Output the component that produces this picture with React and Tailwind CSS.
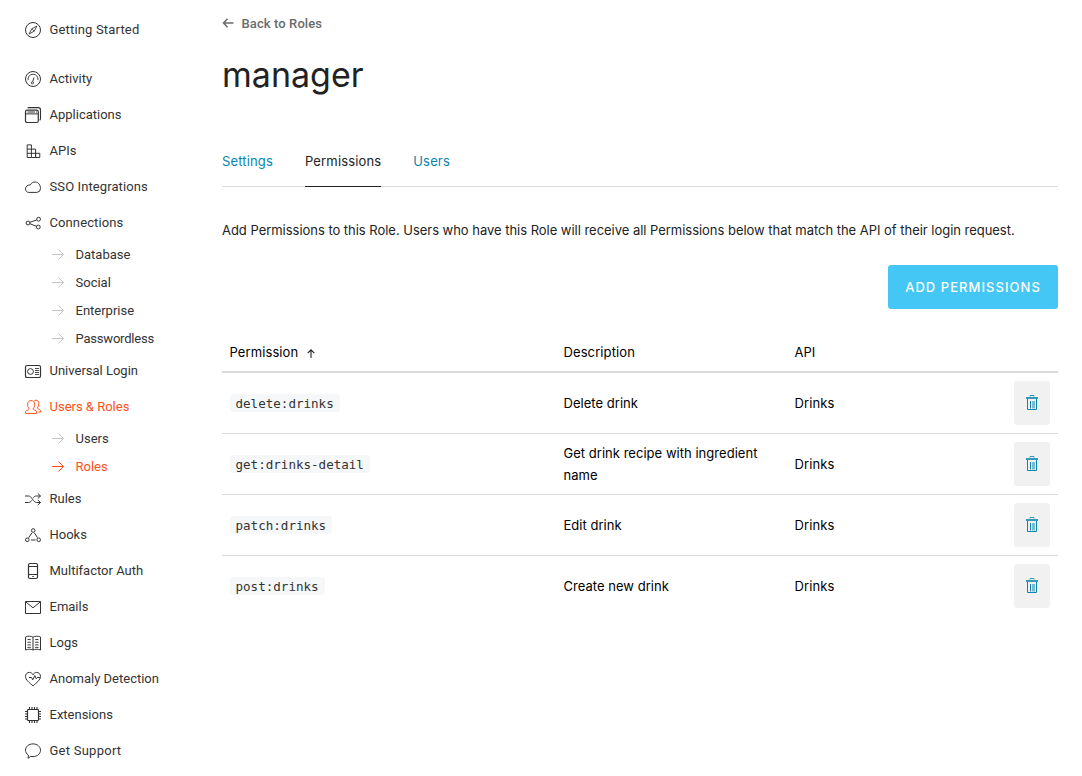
const ICONS = {
  compass: (
    <>
      <circle cx="8" cy="8" r="7.5" />
      <path d="M12 4 9.2 9.2 4 12 6.8 6.8z" strokeWidth="0.9" />
      <path d="M6.8 6.8 9.2 9.2" strokeWidth="0.8" />
    </>
  ),
  gauge: (
    <>
      <circle cx="8" cy="8" r="7.5" />
      <path d="M3.1 9.2A5 5 0 1 1 12.900 9.200" strokeWidth="0.9" />
      <circle cx="7.400" cy="11.800" r="1.100" strokeWidth="0.9" />
      <path d="M7.700 10.700 9 6.500" />
    </>
  ),
  windows: (
    <>
      <rect x="0.5" y="3.2" width="12.8" height="12.3" rx="1.8" strokeWidth="1.2" />
      <path d="M.5 6.9h12.8M2.5 5h7.5M11 5h1" />
      <path d="M2.6 1.2C3 .7 3.4.6 4 .6h9.2c1.4 0 2.3.9 2.3 2.3v8.7c0 .8-.2 1.3-.8 1.7" strokeWidth="1.1" />
    </>
  ),
  blocks: (
    <path d="M2.2 1.900h4.200v12.600H2.200zM6.400 6.100h4.200v8.400M2.200 6.100h4.200M2.200 10.300h12.600v4.200H6.400M10.600 10.300v4.200" />
  ),
  cloud: (
    <path d="M3.7 13.4h8.1a3.9 3.9 0 0 0 3.7-4c0-2.9-1.8-6.4-5.3-6.4-2.2 0-3.9 1-4.9 2.9C2.3 6 .5 7.5.5 9.8c0 2.1 1.4 3.6 3.2 3.6z" />
  ),
  share: (
    <>
      <circle cx="3" cy="8" r="1.9" />
      <circle cx="13.6" cy="4.2" r="1.9" />
      <circle cx="13.3" cy="12" r="1.9" />
      <path d="M4.9 7.3 11.8 4.9M4.8 8.7 11.5 11.3" />
    </>
  ),
  idcard: (
    <>
      <rect x="0.5" y="2.5" width="15" height="12" rx="1.6" strokeWidth="1.2" />
      <circle cx="5.5" cy="8.5" r="2.9" />
      <path d="M10 5.5h4M10 7.5h4M10 9.5h4M10 11.5h4" strokeWidth="0.9" />
    </>
  ),
  users: (
    <>
      <path d="M.6 14.4v-1.5c0-1 1-1.5 2.2-1.9 1-.3 1.4-.6 1.2-1.4-.9-1-1.4-2.3-1.4-4.2C2.6 3 4 1.6 6.1 1.6S9.600 3 9.600 5.400c0 1.900-.5 3.200-1.400 4.200-.2.800.2 1.100 1.200 1.400 1.200.4 2.200.9 2.200 1.900v1.500z" />
      <path d="M9.200 2.100C9.700 1.500 10.300 1.200 11 1.200c1.800 0 2.800 1.300 2.800 3.500 0 1.700-.4 3-1.200 3.900-.2.800.1 1.100 1 1.500 1.100.4 1.900.9 1.900 1.800v1.200h-2.200" />
    </>
  ),
  shuffle: (
    <>
      <path d="M0 5h3.500c1.600 0 2.700 1.200 4 3.200s2.400 3.300 4 3.300h4M0 11.500h3.500c1.400 0 2.400-.8 3.300-2.200M8.200 6.800c.9-1.300 1.900-1.800 3.300-1.800h4" />
      <path d="M12.800 2.400l2.700 2.600L12.800 7.500M12.800 9l2.700 2.500-2.700 2.500" />
    </>
  ),
  hooks: (
    <>
      <circle cx="8.2" cy="3.500" r="1.800" />
      <circle cx="2.300" cy="12.800" r="1.800" />
      <circle cx="13.700" cy="12.800" r="1.800" />
      <path d="M7 5.800 3.600 10.700M9.300 5.800l3.200 4.900M6 13h4.500" />
    </>
  ),
  phone: (
    <>
      <rect x="3.500" y="0.500" width="9" height="15" rx="1.500" strokeWidth="1.200" />
      <path d="M3.500 3.500h9M3.500 11.500h9M7.300 13.500h1.400" strokeWidth="1.100" />
    </>
  ),
  mail: (
    <path d="M.5 2.500h15v12H.5zM.5 2.700 8 8.800l7.500-6.100" />
  ),
  book: (
    <>
      <path d="M8 2.200C6 .9 3 .9.500 2v13c2.500-1 5.500-1 7.500 0 2-1 5-1 7.500 0V2C13 .900 10 .900 8 2.200zM8 2.200V15" />
      <path d="M2.500 4.700c1.200-.3 2.300-.3 3.300 0M2.500 7.400c1.200-.3 2.300-.3 3.300 0M2.500 10c1.200-.3 2.300-.3 3.300 0M2.500 12.500c1.200-.3 2.300-.3 3.300 0M10.200 4.700c1.200-.3 2.300-.3 3.300 0M10.200 7.400c1.200-.3 2.300-.3 3.300 0M10.200 10c1.200-.3 2.300-.3 3.300 0M10.200 12.500c1.200-.3 2.300-.3 3.300 0" />
    </>
  ),
  heart: (
    <>
      <path d="M8 14.800C4.500 11.800.5 9 .5 5.400.5 3.100 2.200 1.400 4.300 1.400 6 1.400 7.300 2.300 8 3.800 8.700 2.300 10 1.400 11.700 1.400c2.100 0 3.800 1.700 3.800 4 0 3.600-4 6.400-7.500 9.400z" />
      <path d="M4 6.500h2.500l1.300 2.300L9.800 4.500l1.500 3.200.9-1.200h3" />
    </>
  ),
  chip: (
    <>
      <rect x="2.500" y="2.500" width="11" height="11" rx="0.800" strokeWidth="1.200" />
      <path d="M4.500 0v2.500M7 0v2.500M9.500 0v2.500M12 0v2.500M4.500 13.500V16M7 13.500V16M9.500 13.500V16M12 13.500V16M0 4.500h2.500M0 7h2.500M0 9.500h2.500M0 12h2.500M13.500 4.500H16M13.500 7H16M13.500 9.500H16M13.500 12H16" strokeWidth="1.100" />
    </>
  ),
  bubble: (
    <path d="M8 .9c4.200 0 7.500 2.700 7.500 6.300s-3.300 6.400-7.500 6.400c-.8 0-1.500-.1-2.200-.3L3.100 15.300l.3-3.100C1.600 11 .5 9.200.5 7.200.5 3.600 3.800.9 8 .9z" />
  ),
};

function Icon({ name }) {
  return (
    <svg viewBox="0 0 16 16" className="size-4 shrink-0 overflow-visible" fill="none" stroke="currentColor" strokeWidth="1">
      {ICONS[name]}
    </svg>
  );
}

const NAV = [
  { icon: "gauge", label: "Activity" },
  { icon: "windows", label: "Applications" },
  { icon: "blocks", label: "APIs" },
  { icon: "cloud", label: "SSO Integrations", className: "tracking-[0.1px]" },
  { icon: "share", label: "Connections", className: "tracking-[0.1px]", children: ["Database", "Social", "Enterprise", "Passwordless"] },
  { icon: "idcard", label: "Universal Login" },
  { icon: "users", label: "Users & Roles", active: true, children: ["Users", "Roles"] },
  { icon: "shuffle", label: "Rules" },
  { icon: "hooks", label: "Hooks" },
  { icon: "phone", label: "Multifactor Auth" },
  { icon: "mail", label: "Emails" },
  { icon: "book", label: "Logs" },
  { icon: "heart", label: "Anomaly Detection" },
  { icon: "chip", label: "Extensions" },
  { icon: "bubble", label: "Get Support", className: "tracking-[0.25px]" },
];

const ROWS = [
  ["delete:drinks", "Delete drink"],
  ["get:drinks-detail", "Get drink recipe with ingredient name"],
  ["patch:drinks", "Edit drink"],
  ["post:drinks", "Create new drink"],
];

function NavItem({ icon, label, active, className = "" }) {
  return (
    <a className={`flex h-9 items-center gap-[8.5px] ${active ? "text-[#ff4f19]" : "text-[#333]"} ${className}`}>
      <Icon name={icon} />
      <span className="whitespace-nowrap">{label}</span>
    </a>
  );
}

function SubItem({ label, active }) {
  return (
    <a
      className={`flex h-7 items-center gap-[11.5px] pl-[27px] ${label === "Passwordless" ? "tracking-[-0.2px]" : ""} ${active ? "text-[#ff4f19]" : "text-[#333]"}`}
    >
      <svg viewBox="0 0 12 12" className={`size-3 shrink-0 ${active ? "" : "text-[#c4c4c4]"}`} fill="none" stroke="currentColor">
        <path d="M0 5.500h11.500M6.500 .5l5 5-5 5" />
      </svg>
      <span>{label}</span>
    </a>
  );
}

function TrashIcon() {
  return (
    <svg viewBox="0 0 12 15" className="mb-px h-[15px] w-3" fill="none" stroke="#0a84ae">
      <path d="M4 1.500V.5h4v1" opacity=".8" />
      <path d="M0 3h12" strokeWidth="2" opacity=".8" />
      <path d="M1.500 4v10.500h9V4" />
      <path d="M4.500 6v7.500" />
      <path d="M7.500 6v7.500" strokeWidth="3" opacity=".5" />
    </svg>
  );
}

export default function App() {
  return (
    <div className="flex h-[776px] w-[1082px] overflow-hidden bg-white font-['Inter','Liberation_Sans',sans-serif] text-[13px]">
      <nav className="w-[222px] shrink-0 pt-3 pl-[25px] font-['Roboto','Liberation_Sans',sans-serif] text-[13px]">
        <NavItem icon="compass" label="Getting Started" className="tracking-[0.17px]" />
        <div className="mt-[13px] flex flex-col">
          {NAV.map((item) => (
            <div key={item.label}>
              <NavItem {...item} />
              {item.children?.map((c) => (
                <SubItem key={c} label={c} active={c === "Roles"} />
              ))}
            </div>
          ))}
        </div>
      </nav>

      <main className="w-[836px] shrink-0 text-black">
        <a className="mt-[14px] flex h-5 items-center gap-[7.5px] font-['Roboto','Liberation_Sans',sans-serif] text-[13px] font-medium tracking-[0.1px] text-[#6b6b6b]">
          <svg viewBox="0 0 12 12" className="mb-0.5 size-3" fill="none" stroke="currentColor" strokeWidth="1.5">
            <path d="M11.500 6H1.800M5.500 1.800 1.500 6l4 4.200" />
          </svg>
          Back to Roles
        </a>
        <h1 className="mt-[17px] h-12 text-[34px] leading-[48px] text-[#222]">manager</h1>
        <div className="mt-[37px] flex h-[51px] gap-8 border-b border-[#d9d9d9] leading-[50px] tracking-[0.15px] text-[#0a84ae]">
          <a className="h-[51px]">Settings</a>
          <a className="h-[51px] border-b border-[#222] text-[#222]">Permissions</a>
          <a className="h-[51px]">Users</a>
        </div>
        <p className="mt-8 h-[22px] leading-[22px] tracking-[-0.03px] whitespace-nowrap text-[#222]">
          Add Permissions to this Role. Users who have this Role will receive all Permissions below that match the API of their login request.
        </p>
        <div className="mt-6 flex justify-end">
          <button className="h-11 w-[170px] rounded-[3px] bg-[#44c7f4] pt-0.5 text-[13px] font-medium tracking-[1.05px] text-white">ADD PERMISSIONS</button>
        </div>
        <div className="mt-6 flex h-10 items-center border-b-2 border-[#d9d9d9] pt-0.5">
          <div className="flex w-[341.5px] items-center gap-[9px] pl-[7.5px] tracking-[0.1px]">
            Permission
            <svg viewBox="0 0 8 9" className="h-[9px] w-2" fill="none" stroke="#222" strokeWidth="1.100">
              <path d="M4 9V1M.7 4.200 4 .9l3.300 3.300" />
            </svg>
          </div>
          <div className="w-[231px] tracking-[0.1px]">Description</div>
          <div>API</div>
        </div>
        {ROWS.map(([code, description]) => (
          <div key={code} className="flex h-[61px] items-center border-b border-[#d9d9d9] pr-2 last:border-transparent">
            <div className="w-[341.5px] pl-2">
              <code className="block h-[18px] w-fit rounded-[3px] bg-[#f5f7f9] pr-[6px] pl-[5.5px] font-['DejaVu_Sans_Mono','Liberation_Mono',monospace] text-[12.550px] leading-[19px] text-[#333]">{code}</code>
            </div>
            <div className="w-[231px] pr-8 leading-[22px] tracking-[0.03px]">{description}</div>
            <div className="flex-1 leading-[22px] tracking-[0.1px]">Drinks</div>
            <button className="flex h-11 w-9 items-center justify-center rounded-[3px] bg-[#f1f1f1]">
              <TrashIcon />
            </button>
          </div>
        ))}
      </main>
    </div>
  );
}
